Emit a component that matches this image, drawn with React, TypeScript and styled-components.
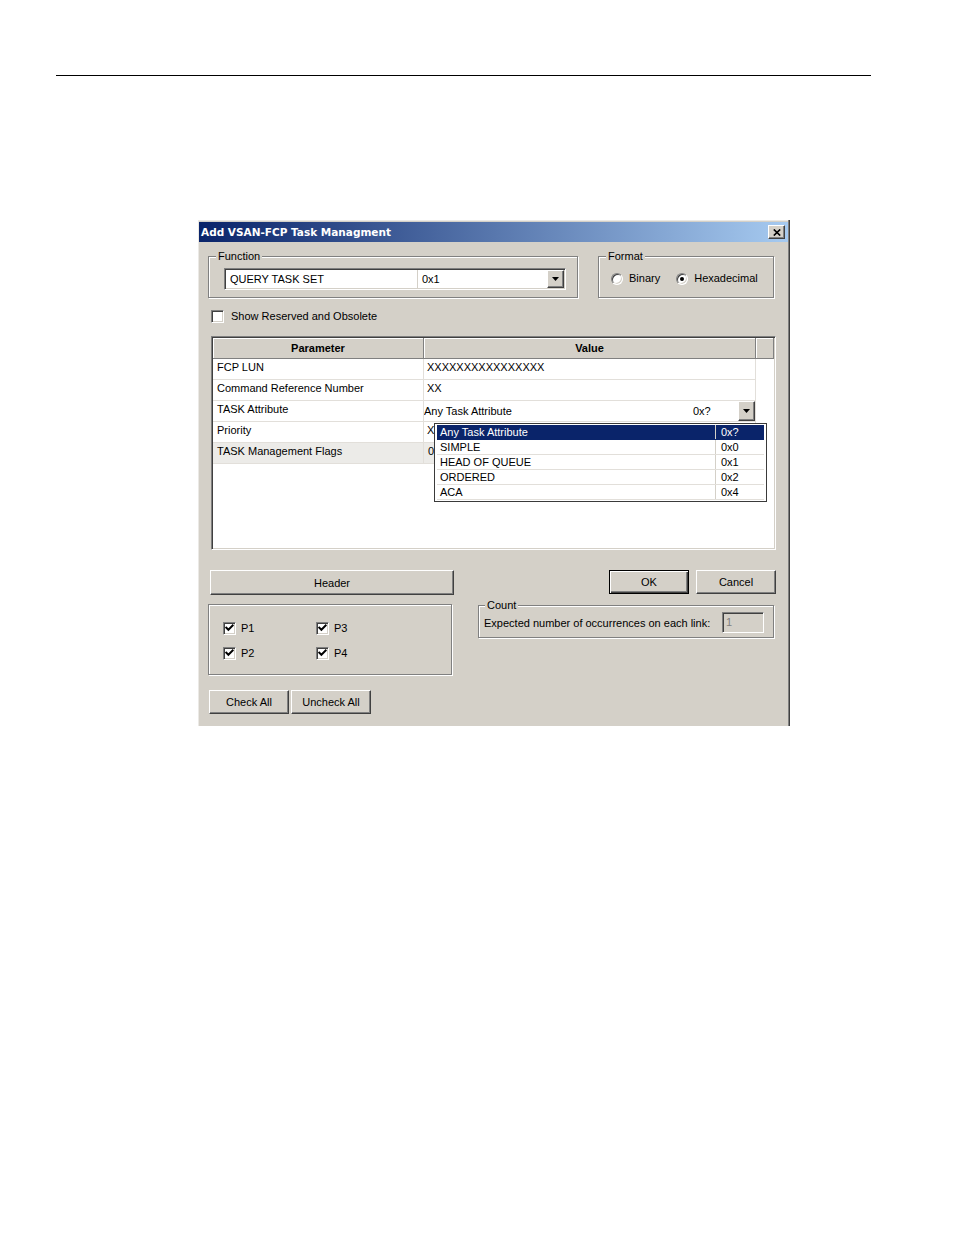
import React from "react";
import styled, { createGlobalStyle } from "styled-components";

const Global = createGlobalStyle`
  html, body { margin: 0; padding: 0; background: #fff; }
  body { font-family: "Liberation Sans", Arial, sans-serif; font-size: 11px; color: #000; }
  * { box-sizing: border-box; }
`;

const FACE = "#d4d0c8";
const SHADOW = "#808080";
const DARK = "#404040";
const GRID = "#e2dfda";

const Page = styled.div`
  padding-top: 75px;
  min-height: 1235px;
`;

const Rule = styled.div`
  margin-left: 56px;
  width: 815px;
  height: 1px;
  background: #000;
`;

const Dialog = styled.div`
  margin: 144px 0 0 198px;
  width: 592px;
  height: 506px;
  padding: 2px 1px 0 1px;
  background: ${FACE};
  border-right: 1px solid ${DARK};
  box-shadow: inset -1px 0 0 ${SHADOW}, inset 1px 1px 0 #ebe9e5;
`;

const TitleBar = styled.div`
  height: 20px;
  display: flex;
  align-items: center;
  justify-content: space-between;
  padding: 0 3px 0 2px;
  background: linear-gradient(to right, #0a246a, #a6caf0);
`;

const Title = styled.span`
  color: #fff;
  font-family: "DejaVu Sans", Verdana, sans-serif;
  font-weight: bold;
  font-size: 10.5px;
  line-height: 20px;
`;

const Raised = styled.div`
  background: ${FACE};
  border: 1px solid;
  border-color: #fff ${DARK} ${DARK} #fff;
  box-shadow: inset -1px -1px 0 ${SHADOW};
  display: flex;
  align-items: center;
  justify-content: center;
`;

const CloseButton = styled(Raised)`
  width: 17px;
  height: 14px;
`;

const Body = styled.div`
  padding-left: 9px;
`;

const TopRow = styled.div`
  display: flex;
  align-items: stretch;
  margin-top: 14px;
`;

const Group = styled.div<{ $w: number }>`
  width: ${(p) => p.$w}px;
  border: 1px solid ${SHADOW};
  box-shadow: inset 1px 1px 0 #fff, 1px 1px 0 #fff;
  display: flex;
  flex-direction: column;
`;

const GroupLabel = styled.div<{ $ml?: number }>`
  width: fit-content;
  height: 13px;
  line-height: 13px;
  margin: -7px 0 0 ${(p) => p.$ml ?? 7}px;
  padding: 0 2px;
  background: ${FACE};
`;

const FunctionGroup = styled(Group)`
  padding: 0 11px 7px 15px;
`;

const FormatGroup = styled(Group)`
  margin-left: 20px;
`;

const Combo = styled.div`
  margin-top: 5px;
  height: 22px;
  display: flex;
  background: #fff;
  border: 1px solid;
  border-color: ${SHADOW} #fff #fff ${SHADOW};
  box-shadow: inset 1px 1px 0 ${DARK}, inset -1px -1px 0 ${FACE};
  padding: 1px;
`;

const ComboField = styled.div<{ $w?: number }>`
  ${(p) => (p.$w ? `width: ${p.$w}px;` : "flex: 1;")}
  padding-left: 4px;
  line-height: 19px;
  white-space: nowrap;
`;

const ComboSep = styled.div`
  width: 1px;
  background: ${FACE};
`;

const ArrowButton = styled(Raised)<{ $h: number }>`
  width: 17px;
  height: ${(p) => p.$h}px;
`;

const RadioRow = styled.div`
  display: flex;
  gap: 16px;
  margin-top: 9px;
  padding-left: 12px;
`;

const RadioItem = styled.label`
  display: flex;
  align-items: center;
  gap: 6px;
  height: 13px;
  line-height: 13px;
`;

const RadioCircle = styled.span`
  width: 12px;
  height: 12px;
  border-radius: 50%;
  background: #fff;
  border: 1px solid;
  border-color: ${SHADOW} #fff #fff ${SHADOW};
  box-shadow: inset 1px 1px 0 ${DARK}, inset -1px -1px 0 ${FACE};
  display: flex;
  align-items: center;
  justify-content: center;
`;

const RadioDot = styled.span`
  width: 4px;
  height: 4px;
  border-radius: 50%;
  background: #000;
`;

const CheckItem = styled.label<{ $ml?: number; $gap?: number }>`
  display: flex;
  align-items: center;
  height: 13px;
  line-height: 13px;
  gap: ${(p) => p.$gap ?? 7}px;
  margin-left: ${(p) => p.$ml ?? 0}px;
`;

const CheckBox = styled.span`
  width: 13px;
  height: 13px;
  background: #fff;
  border: 1px solid;
  border-color: ${SHADOW} #fff #fff ${SHADOW};
  box-shadow: inset 1px 1px 0 ${DARK}, inset -1px -1px 0 ${FACE};
  display: flex;
  align-items: center;
  justify-content: center;
`;

const ShowRow = styled.div`
  margin-top: 12px;
`;

const Table = styled.div`
  position: relative;
  margin: 13px 0 0 3px;
  width: 565px;
  height: 214px;
  background: #fff;
  border: 1px solid;
  border-color: ${SHADOW} #fff #fff ${SHADOW};
  box-shadow: inset 1px 1px 0 ${DARK}, inset -1px -1px 0 ${FACE};
  padding: 1px;
`;

const HeadRow = styled.div`
  display: flex;
  height: 21px;
`;

const HeadCell = styled.div<{ $w?: number }>`
  ${(p) => (p.$w ? `width: ${p.$w}px;` : "flex: 1;")}
  background: ${FACE};
  border-right: 1px solid ${SHADOW};
  border-bottom: 1px solid ${SHADOW};
  box-shadow: inset 1px 1px 0 #fff;
  font-weight: bold;
  text-align: center;
  line-height: 20px;
`;

const DataRow = styled.div<{ $sel?: boolean }>`
  display: flex;
  width: 543px;
  height: 21px;
  background: ${(p) => (p.$sel ? "#ecebe8" : "#fff")};
`;

const Cell = styled.div<{ $w: number; $pl: number }>`
  width: ${(p) => p.$w}px;
  border-right: 1px solid ${GRID};
  border-bottom: 1px solid ${GRID};
  padding-left: ${(p) => p.$pl}px;
  line-height: 17px;
  white-space: nowrap;
  overflow: hidden;
  display: flex;
`;

const CellText = styled.span<{ $w?: number; $pt?: number }>`
  ${(p) => (p.$w ? `width: ${p.$w}px; flex: none;` : "")}
  padding-top: ${(p) => p.$pt ?? 0}px;
  line-height: 17px;
`;

const DropList = styled.div`
  position: absolute;
  left: 222px;
  top: 86px;
  width: 333px;
  height: 79px;
  background: #fff;
  border: 1px solid #3a3a3a;
  padding: 1px 2px;
`;

const DropRow = styled.div<{ $hl?: boolean }>`
  display: flex;
  height: 15px;
  background: ${(p) => (p.$hl ? "#0a246a" : "#fff")};
  color: ${(p) => (p.$hl ? "#fff" : "#000")};
  border-bottom: 1px solid ${(p) => (p.$hl ? "#0a246a" : GRID)};
`;

const DropName = styled.div`
  width: 279px;
  padding-left: 3px;
  line-height: 14px;
  border-right: 1px solid ${FACE};
`;

const DropValue = styled.div`
  flex: 1;
  padding-left: 5px;
  line-height: 14px;
`;

const Bottom = styled.div`
  display: flex;
  margin-top: 20px;
`;

const LeftCol = styled.div`
  width: 246px;
  display: flex;
  flex-direction: column;
`;

const RightCol = styled.div`
  width: 298px;
  margin-left: 24px;
  display: flex;
  flex-direction: column;
`;

const Button = styled.div<{ $w: number; $h?: number; $default?: boolean }>`
  width: ${(p) => p.$w}px;
  height: ${(p) => p.$h ?? 24}px;
  background: ${FACE};
  display: flex;
  align-items: center;
  justify-content: center;
  ${(p) =>
    p.$default
      ? `border: 1px solid #000; box-shadow: inset 1px 1px 0 #fff, inset -1px -1px 0 ${DARK}, inset -2px -2px 0 ${SHADOW};`
      : `border: 1px solid; border-color: #fff ${DARK} ${DARK} #fff; box-shadow: inset -1px -1px 0 ${SHADOW};`}
`;

const HeaderButton = styled(Button)`
  margin-left: 2px;
`;

const PGroup = styled(Group)`
  margin-top: 9px;
  height: 71px;
  padding: 17px 0 0 14px;
`;

const PGrid = styled.div`
  display: grid;
  grid-template-columns: 93px 93px;
  row-gap: 12px;
`;

const ButtonRow = styled.div<{ $end?: boolean; $gap: number; $mt?: number; $ml?: number }>`
  display: flex;
  justify-content: ${(p) => (p.$end ? "flex-end" : "flex-start")};
  gap: ${(p) => p.$gap}px;
  margin-top: ${(p) => p.$mt ?? 0}px;
  margin-left: ${(p) => p.$ml ?? 0}px;
`;

const CountGroup = styled(Group)`
  margin-top: 11px;
  padding: 0 9px 4px 5px;
`;

const CountRow = styled.div`
  display: flex;
  align-items: center;
  height: 21px;
`;

const CountInput = styled.div`
  margin-left: auto;
  width: 42px;
  height: 21px;
  background: ${FACE};
  color: ${SHADOW};
  border: 1px solid;
  border-color: ${SHADOW} #fff #fff ${SHADOW};
  box-shadow: inset 1px 1px 0 ${DARK}, inset -1px -1px 0 ${FACE};
  padding-left: 3px;
  line-height: 19px;
`;

const DownArrow = () => (
  <svg width="7" height="4" viewBox="0 0 7 4">
    <polygon points="0,0 7,0 3.5,4" fill="#000" />
  </svg>
);

const Check = () => (
  <svg width="9" height="9" viewBox="0 0 9 9">
    <path d="M1.3 3.6 L3.4 5.8 L7.7 1.5" stroke="#000" strokeWidth="2" fill="none" strokeLinecap="square" />
  </svg>
);

const Radio = ({ on, label }: { on?: boolean; label: string }) => (
  <RadioItem>
    <RadioCircle>{on && <RadioDot />}</RadioCircle>
    {label}
  </RadioItem>
);

const CheckOpt = ({ on, label, ml, gap }: { on?: boolean; label: string; ml?: number; gap?: number }) => (
  <CheckItem $ml={ml} $gap={gap}>
    <CheckBox>{on && <Check />}</CheckBox>
    {label}
  </CheckItem>
);

const dropItems = [
  ["Any Task Attribute", "0x?"],
  ["SIMPLE", "0x0"],
  ["HEAD OF QUEUE", "0x1"],
  ["ORDERED", "0x2"],
  ["ACA", "0x4"],
];

export default function App() {
  return (
    <Page>
      <Global />
      <Rule />
      <Dialog>
        <TitleBar>
          <Title>Add VSAN-FCP Task Managment</Title>
          <CloseButton>
            <svg width="8" height="7" viewBox="0 0 8 7">
              <path d="M0.8 0.5 L7.2 6.5 M7.2 0.5 L0.8 6.5" stroke="#000" strokeWidth="1.7" />
            </svg>
          </CloseButton>
        </TitleBar>
        <Body>
          <TopRow>
            <FunctionGroup $w={370}>
              <GroupLabel $ml={-8}>Function</GroupLabel>
              <Combo>
                <ComboField $w={191}>QUERY TASK SET</ComboField>
                <ComboSep />
                <ComboField>0x1</ComboField>
                <ArrowButton $h={18}>
                  <DownArrow />
                </ArrowButton>
              </Combo>
            </FunctionGroup>
            <FormatGroup $w={176}>
              <GroupLabel>Format</GroupLabel>
              <RadioRow>
                <Radio label="Binary" />
                <Radio on label="Hexadecimal" />
              </RadioRow>
            </FormatGroup>
          </TopRow>

          <ShowRow>
            <CheckOpt ml={3} label="Show Reserved and Obsolete" />
          </ShowRow>

          <Table>
            <HeadRow>
              <HeadCell $w={211}>Parameter</HeadCell>
              <HeadCell $w={332}>Value</HeadCell>
              <HeadCell />
            </HeadRow>
            <DataRow>
              <Cell $w={211} $pl={4}>FCP LUN</Cell>
              <Cell $w={332} $pl={3}>XXXXXXXXXXXXXXXX</Cell>
            </DataRow>
            <DataRow>
              <Cell $w={211} $pl={4}>Command Reference Number</Cell>
              <Cell $w={332} $pl={3}>XX</Cell>
            </DataRow>
            <DataRow>
              <Cell $w={211} $pl={4}>TASK Attribute</Cell>
              <Cell $w={332} $pl={0}>
                <CellText $w={269} $pt={2}>Any Task Attribute</CellText>
                <CellText $w={45} $pt={2}>0x?</CellText>
                <ArrowButton $h={20}>
                  <DownArrow />
                </ArrowButton>
              </Cell>
            </DataRow>
            <DataRow>
              <Cell $w={211} $pl={4}>Priority</Cell>
              <Cell $w={332} $pl={3}>X</Cell>
            </DataRow>
            <DataRow $sel>
              <Cell $w={211} $pl={4}>TASK Management Flags</Cell>
              <Cell $w={332} $pl={4}>0</Cell>
            </DataRow>
            <DropList>
              {dropItems.map(([n, v], i) => (
                <DropRow key={n} $hl={i === 0}>
                  <DropName>{n}</DropName>
                  <DropValue>{v}</DropValue>
                </DropRow>
              ))}
            </DropList>
          </Table>

          <Bottom>
            <LeftCol>
              <HeaderButton $w={244} $h={25}>Header</HeaderButton>
              <PGroup $w={244}>
                <PGrid>
                  <CheckOpt on gap={5} label="P1" />
                  <CheckOpt on gap={5} label="P3" />
                  <CheckOpt on gap={5} label="P2" />
                  <CheckOpt on gap={5} label="P4" />
                </PGrid>
              </PGroup>
              <ButtonRow $gap={2} $mt={15} $ml={1}>
                <Button $w={80}>Check All</Button>
                <Button $w={80}>Uncheck All</Button>
              </ButtonRow>
            </LeftCol>
            <RightCol>
              <ButtonRow $end $gap={7}>
                <Button $w={80} $default>OK</Button>
                <Button $w={80}>Cancel</Button>
              </ButtonRow>
              <CountGroup $w={296}>
                <GroupLabel $ml={1}>Count</GroupLabel>
                <CountRow>
                  Expected number of occurrences on each link:
                  <CountInput>1</CountInput>
                </CountRow>
              </CountGroup>
            </RightCol>
          </Bottom>
        </Body>
      </Dialog>
    </Page>
  );
}
